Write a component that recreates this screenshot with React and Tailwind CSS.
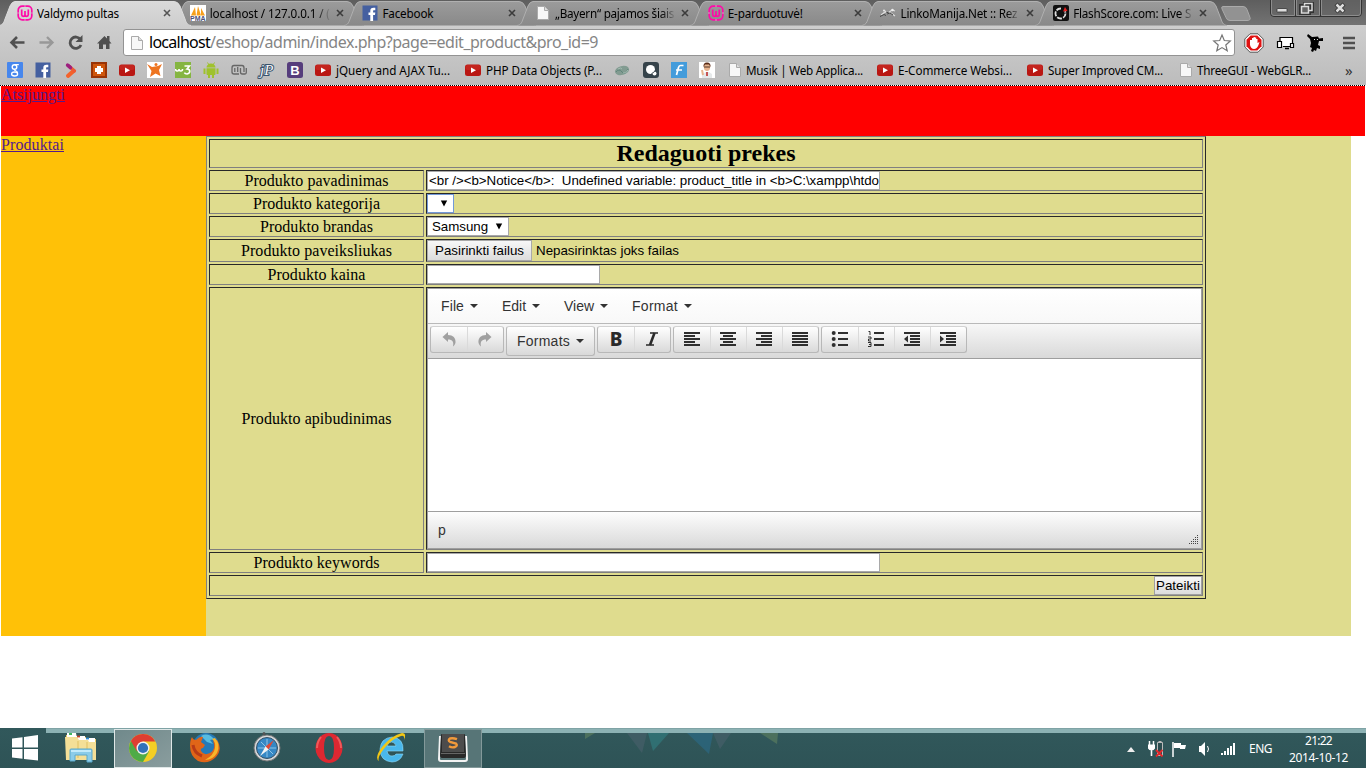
import React, { useLayoutEffect, useRef } from 'react';

/* Text tracked so that it fills the given width */
function T({ w, className = '', children }) {
  const ref = useRef(null);
  useLayoutEffect(() => {
    const el = ref.current;
    el.style.letterSpacing = '0px';
    const width = el.getBoundingClientRect().width;
    el.style.letterSpacing = (w - width) / el.textContent.length + 'px';
  }, [w]);
  return (
    <span ref={ref} className={'inline-block shrink-0 whitespace-pre ' + className}>
      {children}
    </span>
  );
}

function Svg({ size = 16, box = '0 0 16 16', className = '', children }) {
  return (
    <svg width={size} height={size} viewBox={box} className={'block shrink-0 ' + className}>
      {children}
    </svg>
  );
}

const Wamp = () => (
  <Svg>
    <rect x="1.2" y="1.2" width="13.6" height="13.6" rx="4" fill="none" stroke="#ff0aa8" strokeWidth="1.7" />
    <path d="M8 0v2M8 14v2M0 8h2M14 8h2" stroke="#c9a9bd" strokeWidth="1" />
    <path d="M4.700 4.500v5.200q0 1.600 1.600 1.600T8 9.700V6v3.700q0 1.600 1.600 1.600t1.700-1.600V4.500" fill="none" stroke="#ff0aa8" strokeWidth="1.700" />
  </Svg>
);
const Pma = () => (
  <Svg>
    <rect width="16" height="16" fill="#fff" />
    <path d="M1 10.500 5 2l1 8.500zM6.500 10.500 8 1l3 9.500zM11 10.500V3l4 7.500z" fill="#f7a01c" />
    <text x="0" y="16" fontSize="7" fontWeight="bold" fontFamily="Liberation Sans" fill="#4c5078">PMA</text>
  </Svg>
);
const Fb = () => (
  <Svg>
    <rect x=".5" y=".5" width="15" height="15" fill="#4560a0" />
    <path d="M8.300 16V10H6.500V7.400h1.800V6c0-2.200 1-3.200 3.200-3.200h1.800v2.500H12c-.7 0-.9.3-.9 1v1.100h2.200L13 10h-1.900v6z" fill="#fff" />
  </Svg>
);
const Page = () => (
  <Svg>
    <path d="M2.500 1.500h7l4 4v9h-11z" fill="#f7f7f7" stroke="#aaa" />
    <path d="M9.500 1.500v4h4" fill="#ddd" stroke="#aaa" />
  </Svg>
);
const Linko = () => (
  <Svg>
    <path d="M1 10 5 7l6 1 4 3M5 6l3 2 4-3 3 1" stroke="#ddd" strokeWidth="1.200" fill="none" />
    <path d="M0 11.500l4-2 2 1M7 9l3-1 3 2M6 7l3 1" stroke="#444" fill="none" />
    <circle cx="4" cy="5.500" r="1" fill="#eee" /><circle cx="12.500" cy="5" r="1.200" fill="#eee" />
  </Svg>
);
const Flash = () => (
  <Svg>
    <rect width="16" height="16" rx="2" fill="#111" />
    <circle cx="7.500" cy="8.500" r="5" fill="none" stroke="#ddd" strokeWidth="1.800" strokeDasharray="5 1.200" />
    <path d="M8 8V2h5v4z" fill="#111" /><path d="M10 6.500 12 2l2.500 4z" fill="#e62222" />
  </Svg>
);
const Close = ({ active }) => (
  <Svg size={8} box="0 0 8 8">
    <path d="M1 1l6 6M7 1L1 7" stroke={active ? '#555' : '#3c3c3c'} strokeWidth="1.600" />
  </Svg>
);

const tabs = [
  ['Valdymo pultas', 82, Wamp, true],
  ['localhost / 127.0.0.1 / (', 120, Pma],
  ['Facebook', 51, Fb],
  ['„Bayern“ pajamos šiais', 119, Page],
  ['E-parduotuvė!', 75, Wamp],
  ['LinkoManija.Net :: Rez', 117, Linko],
  ['FlashScore.com: Live S', 118, Flash],
];

function Tab({ title, w, Icon, active }) {
  return (
    <div className={'relative h-[25px] w-[172.7px] shrink-0 ' + (active ? 'z-10' : '')}>
      <svg className="absolute top-0 left-0 block overflow-visible" width="190" height="26" viewBox="0 0 190 26">
        <path
          d="M-1 25.500C3 25 4 22 5 19L10 6Q12 1.500 15 1.500H174Q178 1.500 180 6L185 19C186 22 187 25 191 25.500"
          fill={active ? 'url(#tabOn)' : 'url(#tabOff)'}
          stroke={active ? '#dcdcdc' : '#b0b0b0'}
        />
        {active && <rect x="0" y="25" width="190" height="1.500" fill="#cecece" />}
      </svg>
      <div className="relative flex h-full items-center pl-[17px] text-[#000]">
        <Icon />
        <div
          className={
            'ml-1 flex h-full w-[121px] items-center overflow-hidden ' +
            (w > 110 ? 'mask-r-from-88% mask-r-to-100%' : '')
          }
        >
          <T w={w} className="text-[11.7px] leading-[18px]">{title}</T>
        </div>
        <div className="ml-[5px]"><Close active={active} /></div>
      </div>
    </div>
  );
}

const Yt = () => (
  <Svg>
    <rect x="0" y="2.500" width="16" height="11.500" rx="2.500" fill="#b91612" />
    <rect x=".5" y="3" width="15" height="5" rx="2" fill="#d0332c" opacity=".5" />
    <path d="M6 5.500v5.500l5-2.700z" fill="#fff" />
  </Svg>
);
const GoogleG = () => (
  <Svg>
    <rect width="16" height="16" rx="1" fill="#4787ed" />
    <ellipse cx="7.500" cy="5" rx="2.300" ry="2.300" fill="none" stroke="#fff" strokeWidth="1.400" />
    <ellipse cx="7.600" cy="12" rx="3" ry="2" fill="none" stroke="#fff" strokeWidth="1.300" />
    <path d="M7.500 2.600h4.300M7.500 7.500q0 1 1.500 1.500t1.500 2" fill="none" stroke="#fff" strokeWidth="1.300" />
  </Svg>
);
const Chevron = () => (
  <Svg>
    <path d="M4.500 3 8 6" stroke="#9d1f7e" strokeWidth="3.400" />
    <path d="M5.200 13.800 10.500 9" stroke="#f4622b" strokeWidth="4.200" strokeLinecap="round" />
    <path d="M7 5l4.500 4" stroke="#ee5a35" strokeWidth="3.200" strokeLinecap="round" />
    <path d="M4.500 3 7.500 5.600" stroke="#9d1f7e" strokeWidth="3.400" strokeLinecap="round" />
  </Svg>
);
const Plus = () => (
  <Svg>
    <rect width="16" height="16" fill="#9a3406" /><rect x="2" y="2" width="12" height="12" fill="#cf560c" />
    <path d="M6 4h4v2h2v4h-2v2H6v-2H4V6h2z" fill="#fff" />
  </Svg>
);
const Joy = () => (
  <Svg>
    <rect width="16" height="16" fill="#fff" />
    <path d="M0 2l5 3 6-1 4-2-3 6 1.500 6-5-2.500L3 15l1.500-6z" fill="#ee7420" /><circle cx="9" cy="2.500" r="1.500" fill="#ee7420" />
  </Svg>
);
const W3 = () => (
  <Svg>
    <rect width="16" height="16" fill="#85b541" />
    <path d="M.5 7q0 2 1.800 2T4 7q0 2 1.800 2T7.500 7M9.500 4h5l-2.500 3q2.800 0 2.800 2.300T12 12q-2 0-2.600-1.300" fill="none" stroke="#fff" strokeWidth="1.600" />
  </Svg>
);
const Android = () => (
  <Svg>
    <path d="M3.500 5.500a4.500 4 0 0 1 9 0zM3.500 6.300h9V12q0 1-1 1H11v3H9v-3H7v3H5v-3h-.5q-1 0-1-1zM.5 6.500h2V12h-2zM13.500 6.500h2V12h-2z" fill="#9fc22d" />
    <path d="M4.500.5 6 3M11.500.5 10 3" stroke="#9fc22d" />
  </Svg>
);
const Mj = () => (
  <Svg>
    <path d="M1 6q0-2.500 2-2.500h8Q13 3.500 13 6v4M3.800 6v4M6.700 5v5M9.500 6v4q0 2 1.800 2H14q1.300 0 1.300-1.500V6M1 6v4q0 2 2 2h5" fill="none" stroke="#666" strokeWidth="1.300" />
  </Svg>
);
const Jp = () => (
  <Svg className="overflow-visible">
    <text x="1" y="12.500" fontSize="15" fontStyle="italic" fontFamily="Liberation Serif" fill="#f4f6f8" stroke="#38536d" strokeWidth="2" paintOrder="stroke">jP</text>
  </Svg>
);
const Boot = () => (
  <Svg>
    <rect width="16" height="16" rx="2.500" fill="#563d7c" />
    <text x="8" y="12.500" textAnchor="middle" fontSize="13" fontWeight="bold" fontFamily="Liberation Sans" fill="#fff">B</text>
  </Svg>
);
const Brain = () => (
  <Svg>
    <ellipse cx="8" cy="8.500" rx="7.200" ry="4.500" transform="rotate(-15 8 8.500)" fill="#829b91" />
    <path d="M2 10q3-4 6 0t6-3" stroke="#5f857a" fill="none" />
    <path d="M4 7q3-2 4 0M9 11q3 1 5-3" stroke="#a5bdb2" fill="none" />
  </Svg>
);
const Bubble = () => (
  <Svg>
    <rect width="16" height="16" rx="3" fill="#36434a" /><circle cx="7.500" cy="7.500" r="4.500" fill="#fff" />
    <circle cx="11.500" cy="11.500" r="2" fill="#fff" /><path d="M8.500 11.500q2.500-.5 3.500-3" stroke="#36434a" fill="none" />
  </Svg>
);
const Fblue = () => (
  <Svg>
    <rect width="16" height="16" fill="#449cdb" />
    <path d="M12.500 3.500H9.500Q8 3.500 7.500 5.500L5.500 13M5 8h6" fill="none" stroke="#fff" strokeWidth="1.700" />
  </Svg>
);
const Man = () => (
  <Svg>
    <rect width="16" height="16" fill="#fff" />
    <path d="M3 16v-4l4-2h3l3 2v4z" fill="#e6e9ea" /><ellipse cx="8" cy="5" rx="3.200" ry="4" fill="#e8b48e" />
    <path d="M4.500 5Q4 .5 8 .5T11.500 5L10 2.500H6z" fill="#5a2c18" /><path d="M5 5h6" stroke="#503023" />
    <path d="M8 10v4" stroke="#b22" strokeWidth="1.500" /><path d="M3 8l1 5" stroke="#e8b48e" strokeWidth="2" />
  </Svg>
);

const marks = [
  [GoogleG, 'w-[28px]'], [Fb, 'w-[28px]'], [Chevron, 'w-[28px]'], [Plus, 'w-[28px]'], [Yt, 'w-[28px]'],
  [Joy, 'w-[28px]'], [W3, 'w-[28px]'], [Android, 'w-[28px]'], [Mj, 'w-[28px]'], [Jp, 'w-[28px]'], [Boot, 'w-[28px]'],
  [Yt, 'w-[150px]', 'jQuery and AJAX Tu...', 114],
  [Yt, 'w-[149px]', 'PHP Data Objects (P...', 116],
  [Brain, 'w-[29px]'], [Bubble, 'w-[28px]'], [Fblue, 'w-[28px]'], [Man, 'w-[28px]'],
  [Page, 'w-[150px]', 'Musik | Web Applica...', 117],
  [Yt, 'w-[150px]', 'E-Commerce Websi...', 114],
  [Yt, 'w-[151px]', 'Super Improved CM...', 115],
  [Page, 'w-[167px]', 'ThreeGUI - WebGLR...', 114],
];

function Chrome() {
  return (
    <header className="font-['Noto_Sans','Open_Sans',sans-serif]">
      <div className="flex h-[25px] bg-linear-to-b from-[#5e5e5e] to-[#737373]">
        <svg width="0" height="0" className="absolute">
          <defs>
            <linearGradient id="tabOn" x2="0" y2="1"><stop stopColor="#dadada" /><stop offset="1" stopColor="#cecece" /></linearGradient>
            <linearGradient id="tabOff" x2="0" y2="1"><stop stopColor="#9b9b9b" /><stop offset="1" stopColor="#898989" /></linearGradient>
          </defs>
        </svg>
        {tabs.map(([title, w, Icon, active]) => (
          <Tab key={title} title={title} w={w} Icon={Icon} active={active} />
        ))}
        <svg width="36" height="25" className="ml-[11px] block shrink-0">
          <path d="M3 6.500h20q3 0 4 3l3 8q1 3-3 3H10q-3 0-4-3L2 9Q1 6.500 3 6.500z" fill="#929292" stroke="#aaa" />
        </svg>
        <svg width="94" height="18" className="ml-auto mr-[3px] block shrink-0">
          <path d="M1.500-1V13q0 3.500 3.500 3.500H89q3.500 0 3.500-3.500V-1M26.500 0v16M51.500 0v16" fill="#646464" fillOpacity=".5" stroke="#333" />
          <path d="M2.500 0V13q0 2.500 2.500 2.500H25.500V0M27.500 0v15.500h23V0M52.500 0v15.500H89q2.500 0 2.500-2.500V0" fill="none" stroke="#8d8d8d" />
          <rect x="8" y="8.500" width="10" height="3.500" rx=".5" fill="#ddd" stroke="#333" strokeWidth=".8" />
          <path d="M35.500 6.500V3.500h8v8h-3M31.500 5.500h9v8h-9z" fill="none" stroke="#333" strokeWidth="3" />
          <path d="M35.500 5.500V3.500h7.500v7h-3M32.500 6.500h7v6.500h-7z" fill="none" stroke="#ddd" strokeWidth="1.500" />
          <path d="M67 4l8 8M75 4l-8 8" stroke="#333" strokeWidth="4.200" />
          <path d="M67.500 4.500l7 7M74.500 4.500l-7 7" stroke="#ddd" strokeWidth="2.500" />
        </svg>
      </div>
      <div className="flex h-[33px] items-center bg-linear-to-b from-[#cecece] to-[#c4c4c4] pt-[2px]">
        <svg width="123" height="28" viewBox="0 0 123 28" className="block shrink-0">
          <path d="M24.500 13.500H12M17 8l-5.500 5.500L17 19" fill="none" stroke="#505050" strokeWidth="2.600" />
          <path d="M39.500 13.500H52M47 8l5.500 5.500L47 19" fill="none" stroke="#989898" strokeWidth="2.300" />
          <path d="M80.500 10.500A5.700 5.700 0 1 0 81 16" fill="none" stroke="#505050" strokeWidth="2.800" />
          <path d="M82.500 6v7h-7z" fill="#505050" />
          <path d="M97 14.500 104.500 7l2.500 2.500V7h2.500v5l2 2.500h-2V20h-3.500v-4.500h-3V20h-4v-5.500z" fill="#505050" />
        </svg>
        <div className="flex h-[27px] w-[1112px] items-center rounded-[3px] border border-[#939393] bg-white px-[5px]">
          <Page />
          <div className="ml-[4px] flex pb-px text-[16px] leading-[22px]">
            <T w={61} className="text-black">localhost</T>
            <T w={388} className="text-[#858585]">/eshop/admin/index.php?page=edit_product&amp;pro_id=9</T>
          </div>
          <Svg size={20} box="0 0 20 20" className="-mr-[3px] ml-auto">
            <path d="M10 2l2.300 5.500 6 .5-4.500 4 1.400 5.800L10 14.600 4.800 17.800 6.200 12 1.700 8l6-.5z" fill="#fff" stroke="#757575" strokeWidth="1.200" />
          </Svg>
        </div>
        <div className="ml-[9px] flex items-center">
          <Svg size={20} box="0 0 20 20">
            <path d="M6 .8h8L19.200 6v8L14 19.200H6L.8 14V6z" fill="#fff" stroke="#555" />
            <path d="M6.700 2.500h6.600l4.200 4.200v6.600l-4.200 4.200H6.700l-4.200-4.200V6.700z" fill="#df1111" />
            <path d="M6 8v4q1 4 4 4t4.500-4l1-3-2 1V6h-1.300V4.500h-1.400V4H9.500v1H8v2H6z" fill="#fff" />
          </Svg>
          <svg width="20" height="18" viewBox="0 0 20 18" className="ml-[12px] block">
            <path d="M4 12V3.500h12.500V12M7 12.500h8" fill="#fff" stroke="#000" strokeWidth="1.200" />
            <path d="M9 14.500h4" stroke="#000" strokeWidth="1.500" />
            <path d="M1.500 7.500h4v6h-4zM14.500 9.500h3v4h-3z" fill="#fff" stroke="#000" strokeWidth="1.200" />
          </svg>
          <svg width="18" height="20" viewBox="0 0 18 20" className="ml-[11px] block">
            <path d="M1 1l4 3 6-.5 1 2 4-.5v3h-4l-1 4 2 1v3l-3-1-1 3-2-1-1 2-2-1 1-3-2-1 1-4-1-4-3-3z" fill="#000" />
            <path d="M7 6l1 1M10 6l.8 1" stroke="#eee" />
          </svg>
          <svg width="14" height="14" viewBox="0 0 14 14" className="ml-[17px] block">
            <path d="M1 2h12M1 7h12M1 12h12" stroke="#505050" strokeWidth="2.600" />
          </svg>
        </div>
      </div>
      <div className="flex h-[27px] items-center bg-linear-to-b from-[#c4c4c4] to-[#bcbcbc] pl-[7px] pb-[3px]">
        {marks.map(([Icon, width, text, w], i) => (
          <div key={i} className={'flex h-full shrink-0 items-center ' + width}>
            <Icon />
            {text && <T w={w} className={'pb-px text-[11.7px] leading-4 text-black ' + (Icon === Page ? 'ml-[3px]' : 'ml-[5px]')}>{text}</T>}
          </div>
        ))}
        <span className="w-3 text-[15px] leading-4 text-[#333]">»</span>
      </div>
      <div className="h-px bg-[repeating-linear-gradient(90deg,#000_0_1px,#fff_1px_2px)]" />
    </header>
  );
}

const dim = "border border-t-[#282828] border-l-[#282828] border-b-[#808080] border-r-[#808080]";

function Label({ children, w }) {
  return <div className={'flex items-center justify-center text-[16px] leading-[18px] text-black ' + dim}><T w={w}>{children}</T></div>;
}
function Cell({ children, className = '' }) {
  return <div className={"flex items-start overflow-hidden font-['Liberation_Sans',sans-serif] text-[13.33px] leading-[15px] text-black " + dim + ' ' + className}>{children}</div>;
}
const field = 'h-[19px] border border-t-[#a9a9a9] border-l-[#a9a9a9] border-b-[#a9a9a9] border-r-[#a9a9a9] bg-white ';
const Down = () => (
  <svg width="8" height="7" viewBox="0 0 8 7" className="block shrink-0"><path d="M.8.500h6.400L4 6.500z" fill="#000" /></svg>
);

const Caret = ({ className = '' }) => (
  <svg width="8" height="4" viewBox="0 0 8 4" className={'block shrink-0 ' + className}><path d="M0 0h8L4 4z" fill="#333" /></svg>
);
const group = 'flex h-[27px] shrink-0 rounded-[3px] border border-[#b8b8b8] border-t-[#d2d2d2] bg-linear-to-b from-white to-[#d9d9d9] ';
function Group({ items, className = '' }) {
  return (
    <div className={group + className}>
      {items.map((it, i) => (
        <div key={i} className={'flex w-[36px] items-center justify-center pb-px ' + (i ? 'border-l border-[#dadada] pr-[2px]' : '')}>{it}</div>
      ))}
    </div>
  );
}
const lines = (rows, extra) => (
  <svg width="18" height="16" viewBox="0 0 18 16" className="block">
    {rows.map(([x, w], i) => <rect key={i} x={x} y={1 + i * (rows.length === 3 ? 6 : 3)} width={w} height="2" fill="#2f2f2f" />)}
    {extra}
  </svg>
);
const Undo = ({ flip }) => (
  <svg width="16" height="16" viewBox="0 0 16 16" className={'block ' + (flip ? '-scale-x-100' : '')}>
    <path d="M1.500 6 7 1v3c5 0 8 3 7.500 7.500-.3 1.700-1.200 3-2.500 4 1-4.500-.5-7-5-7V11z" fill="#a0a0a0" />
  </svg>
);

function Editor() {
  return (
    <div className="flex h-[261px] w-[775px] flex-col border border-[#9e9e9e] bg-white text-[14px] text-[#333]">
      <div className="flex h-[35px] items-center border-b border-[#b9b9b9] bg-linear-to-b from-white to-[#f8f8f8] pl-[13px]">
        <div className="flex w-[61px] items-center"><T w={23}>File</T><Caret className="ml-[6px]" /></div>
        <div className="flex w-[62px] items-center"><T w={24}>Edit</T><Caret className="ml-[6px]" /></div>
        <div className="flex w-[68px] items-center"><T w={30}>View</T><Caret className="ml-[6px]" /></div>
        <div className="flex items-center"><T w={46}>Format</T><Caret className="ml-[6px]" /></div>
      </div>
      <div className="flex h-[35px] items-start gap-[2px] border-b border-[#9e9e9e] bg-linear-to-b from-[#f7f7f7] to-[#d9d9d9] pt-[2px] pl-[2px]">
        <Group items={[<Undo />, <Undo flip />]} />
        <div className={group + 'h-[30px]! w-[89px] items-center justify-center'}>
          <T w={53}>Formats</T><Caret className="ml-[6px]" />
        </div>
        <Group
          items={[
            <span className="font-['Noto_Sans'] text-[19px] leading-5 font-extrabold text-[#2a2a2a]">B</span>,
            <svg width="14" height="16" viewBox="0 0 14 16" className="block"><path d="M5 2h8M1 14h8" stroke="#2a2a2a" strokeWidth="1.400" /><path d="M9.500 2 5 14" stroke="#2a2a2a" strokeWidth="2.600" /></svg>,
          ]}
        />
        <Group
          items={[
            lines([[1, 16], [1, 11], [1, 16], [1, 11], [1, 16]]),
            lines([[1, 16], [4, 10], [1, 16], [4, 10], [1, 16]]),
            lines([[1, 16], [6, 11], [1, 16], [6, 11], [1, 16]]),
            lines([[1, 16], [1, 16], [1, 16], [1, 16], [1, 16]]),
          ]}
        />
        <Group
          items={[
            lines([[7, 10], [7, 10], [7, 10]], [2, 8, 14].map((y) => <circle key={y} cx="2.700" cy={y} r="2" fill="#2f2f2f" />)),
            lines([[7, 10], [7, 10], [7, 10]], <path d="M1.500.5H3V4M1 6h3v2H1.500v2H4M1 11.500h3v4H1M2 13.500h2" fill="none" stroke="#2f2f2f" />),
            lines([[1, 16], [7, 10], [7, 10], [7, 10], [1, 16]], <path d="M5 4.500v7L1 8z" fill="#2f2f2f" />),
            lines([[1, 16], [7, 10], [7, 10], [7, 10], [1, 16]], <path d="M1 4.500v7L5 8z" fill="#2f2f2f" />),
          ]}
        />
      </div>
      <div className="flex-1" />
      <div className="flex h-[37px] items-center justify-between border-t border-[#9e9e9e] bg-linear-to-b from-[#fdfdfd] to-[#d9d9d9] pl-[10px]">
        <span>p</span>
        <svg width="12" height="12" viewBox="0 0 12 12" className="mr-[1px] mb-[1px] block self-end">
          {[0, 1, 2, 3, 4].map((r) =>
            Array.from({ length: r + 1 }, (_, c) => <rect key={r + '-' + c} x={9 - c * 2} y={0 + r * 2} width="1" height="1" fill="#444" />)
          )}
        </svg>
      </div>
    </div>
  );
}

function ProductForm() {
  return (
    <div className="grid h-[463px] w-[1000px] grid-cols-[215px_777px] grid-rows-[29px_21px_21px_21px_23px_21px_263px_21px_21px] gap-[2px] border border-t-[#808080] border-r-[#282828] border-b-[#282828] border-l-[#808080] p-[2px]">
      <div className={'col-span-2 flex items-center justify-center text-[24px] leading-[27px] font-bold text-black ' + dim}>
        <T w={179}>Redaguoti prekes</T>
      </div>
      <Label w={144}>Produkto pavadinimas</Label>
      <Cell>
        <div className={field + 'flex w-[453px] items-center overflow-hidden pl-px'}>
          <T w={450}>{'<br /><b>Notice</b>:  Undefined variable: product_title in <b>C:\\xampp\\htdo'}</T>
        </div>
      </Cell>
      <Label w={127}>Produkto kategorija</Label>
      <Cell>
        <div className="flex h-[19px] w-[27px] items-center border border-[#7399d8] bg-white pl-[12px]"><Down /></div>
      </Cell>
      <Label w={113}>Produkto brandas</Label>
      <Cell>
        <div className={field + 'flex w-[82px] items-center pl-[4px]'}><T w={56}>Samsung</T><div className="ml-[7px]"><Down /></div></div>
      </Cell>
      <Label w={151}>Produkto paveiksliukas</Label>
      <Cell>
        <div className="flex h-[21px] w-[105px] items-center justify-center border border-[#a9a9a9] bg-linear-to-b from-[#f7f7f7] to-[#dcdcdc]"><T w={89}>Pasirinkti failus</T></div>
        <T w={143} className="ml-[4px] self-center">Nepasirinktas joks failas</T>
      </Cell>
      <Label w={98}>Produkto kaina</Label>
      <Cell><div className={field + 'w-[173px]'} /></Cell>
      <Label w={150}>Produkto apibudinimas</Label>
      <Cell><Editor /></Cell>
      <Label w={126}>Produkto keywords</Label>
      <Cell><div className={field + 'w-[453px]'} /></Cell>
      <div className={"col-span-2 flex justify-end font-['Liberation_Sans',sans-serif] text-[13.33px] leading-[15px] text-black " + dim}>
        <div className="flex h-[19px] w-[48px] items-center justify-center border border-[#a0a0a0] bg-linear-to-b from-[#f7f7f7] to-[#dcdcdc]"><T w={44}>Pateikti</T></div>
      </div>
    </div>
  );
}

const Big = ({ children, className = '' }) => <svg width="32" height="32" viewBox="0 0 32 32" className={'block ' + className}>{children}</svg>;
const Explorer = () => (
  <Big>
    <path d="M1 3h10v2h10v2h10v20H1z" fill="#eccb6b" /><path d="M2 1h9l1 5h-10zM10 4h10v4H10zM20 6h10v4H20z" fill="#fff" />
    <path d="M0 5h12l2 3h9l1 2h7v18H1z" fill="#f4df97" /><path d="M13 9v17M22 10v14" stroke="#dfbf61" />
    <path d="M4 2h3" stroke="#2ab04d" strokeWidth="1.800" /><path d="M12 4.500h3" stroke="#c8442a" strokeWidth="1.800" /><path d="M21 6.500h3" stroke="#2d8ad0" strokeWidth="1.800" />
    <path d="M5 18q0-1 1-1h20q1 0 1 1v12h-5v-7H10v6H5z" fill="#8bcce9" stroke="#5aa8cb" /><path d="M6 19h20" stroke="#d5f4ff" strokeWidth="1.500" />
  </Big>
);
const ChromeIcon = () => (
  <Big>
    <circle cx="16" cy="16" r="14" fill="#f4ce24" />
    <path d="M16 16 3.900 9A14 14 0 0 0 16 30l6-10.500z" fill="#4fab47" />
    <path d="M3.900 9A14 14 0 0 1 28.300 9.500H16L10 19.500z" fill="#de3e32" />
    <circle cx="16" cy="16" r="6.500" fill="#f2f2f2" /><circle cx="16" cy="16" r="5.100" fill="#3272ba" />
  </Big>
);
const Firefox = () => (
  <Big>
    <circle cx="17" cy="14" r="13" fill="#257ab7" /><path d="M12 4q7-4 13 3l-4 1 3 4-6-2z" fill="#57bce0" />
    <path d="M3 5q1 3 4 3 4-4 7-3l-2 5 4 3-2 3q-3 0-2 3 3 5 9 2 5-3 4-9-2-6 3-4 6 9-1 17-8 8-18 4Q1 24 1 14 1 8 3 5z" fill="#e06518" />
    <path d="M26 6q6 7 2 15-4 7-12 7 9-5 10-12 1-6-3-9z" fill="#f8b62b" /><path d="M4 13q1 8 9 11" stroke="#b83b17" strokeWidth="3" fill="none" />
  </Big>
);
const Safari = () => (
  <Big>
    <circle cx="16" cy="16" r="13" fill="#d5d8da" stroke="#777" /><circle cx="16" cy="16" r="10.500" fill="#3688c5" stroke="#365267" />
    <path d="M16 7v18M7 16h18M10 10l12 12" stroke="#a7d4ef" strokeWidth=".8" />
    <path d="M23 8l-5.500 9.500-3-3z" fill="#dd4a38" /><path d="M9 24l5.500-9.500 3 3z" fill="#f4f4f4" /><circle cx="13" cy="1.500" r="1.500" fill="#555" />
  </Big>
);
const Opera = () => (
  <Big>
    <path d="M16 1a13.500 15 0 1 0 .01 0zM16 4q5 0 5 12t-5 12-5-12 5-12z" fillRule="evenodd" fill="#dd2831" />
    <path d="M8 5Q4 10 4 16M24 5q4 5 4 11" stroke="#ee5b5c" strokeWidth="2" fill="none" />
  </Big>
);
const IE = () => (
  <Big>
    <path d="M28 19H12q1 5 5 5 3 0 4-2h7q-3 8-11 8Q5 29 5 17 6 6 17 5q12 1 11 14zM12 14h9q-1-4-4.500-4T12 14z" fill="#49b7eb" stroke="#8edcfa" strokeWidth=".6" />
    <path d="M4 29Q-1 26 7 15 17 3 27 1q5 0 2 7 1-5-3-4Q16 7 8 18q-6 8-4 11z" fill="#f2c716" />
  </Big>
);
const Sublime = () => (
  <Big>
    <path d="M3 4 2 27q0 2 2 2h24q2 0 2-2L29 4" fill="none" stroke="#f3f3f3" strokeWidth="2" />
    <path d="M4 3q0-1 1-1h22q1 0 1 1l1 20q0 3-2 3H5q-2 0-2-3z" fill="#292929" /><path d="M5 2h22v18H5z" fill="#4c4c4c" /><path d="M4 21.500h24" stroke="#666" />
    <path d="M20 7.200q-4-1.600-7-.7-2.500 2 0 3.300l6 1.700q2 2-1 3.500-3 1-6-.8" fill="none" stroke="#f19a3b" strokeWidth="2.400" />
  </Big>
);

const apps = [
  [Explorer, ''], [ChromeIcon, 'border border-[#dfe7e7] bg-linear-to-br from-[#70898b] to-[#8a9d9e]'], [Firefox, ''], [Safari, ''],
  [Opera, ''], [IE, ''], [Sublime, 'border border-[#83999a] bg-[#577577]'],
];

function Taskbar() {
  return (
    <footer className="relative flex h-10 overflow-hidden bg-linear-to-b from-[#31585b] to-[#2e5356] font-['Noto_Sans','Open_Sans',sans-serif] text-white">
      <div className="absolute top-0 right-0 left-[46px] h-[5px] border-t border-[#7fa3a5] bg-[#8cb2b4]" />
      <svg width="200" height="35" className="absolute top-[5px] left-[580px] block opacity-60">
        <path d="M5 0h10L5 6z" fill="#5f8260" /><path d="M47 0h20l-5 20z" fill="#4a606c" /><path d="M68 0h21L73 18z" fill="#318083" />
        <path d="M107 0h26l-4 21z" fill="#2b6c8b" /><path d="M133 0h18l-11 16z" fill="#4a606c" /><path d="M180 0h18l-1 11z" fill="#5f8260" />
      </svg>
      <div className="relative flex w-[50px] items-center pl-[12px]">
        <svg width="26" height="26" viewBox="0 0 26 26" className="block"><path d="M0 3.500l10.500-1.300V12.500H0zM12 2 26 0v12.500H12zM0 14h10.500v9.700L0 22.500zM12 14h14v11.500L12 24z" fill="#fff" /></svg>
      </div>
      <div className="relative flex items-center gap-1 pl-[2px]">
        {apps.map(([Icon, look], i) => (
          <div key={i} className={'flex h-[39px] w-[58px] items-center justify-center ' + look}><Icon /></div>
        ))}
      </div>
      <div className="relative ml-auto flex items-center pt-[2px] pr-[18px]">
        <svg width="112" height="20" viewBox="0 0 112 20" className="block">
          <path d="M0 13h8L4 8z" fill="#eee" />
          <path d="M30.500 3.500h5v13h-5zM31.500 2.500h3" fill="#2c4d50" stroke="#bbb" />
          <path d="M22.500 2v4M26.500 2v4" stroke="#fff" strokeWidth="1.500" /><path d="M21 5.500h7v4q-1 2-3.500 2T21 9.500zM23.700 11h1.600v6h-1.600z" fill="#fff" />
          <path d="M29 11l6.500 6.500M35.500 11 29 17.500" stroke="#e32629" strokeWidth="1.800" />
          <path d="M46 3v15" stroke="#fff" strokeWidth="1.500" /><path d="M47 4h7v2h5l-1 4h-5V9h-6z" fill="#fff" />
          <path d="M72 7h2l4-4v14l-4-4h-2z" fill="#fff" /><path d="M80.500 7q2 3 0 6" stroke="#fff" fill="none" />
          <path d="M95 14v2M98 12v4M101 9v7M104 7v9M107 4v12" stroke="#fff" strokeWidth="2" />
        </svg>
        <T w={23} className="ml-[10px] text-[12px] leading-4">ENG</T>
        <div className="ml-[17px] flex flex-col items-center text-[12px] leading-[17px]">
          <T w={27}>21:22</T>
          <T w={59}>2014-10-12</T>
        </div>
      </div>
    </footer>
  );
}

export default function App() {
  return (
    <div className="flex h-[768px] w-[1366px] flex-col overflow-hidden bg-white">
      <Chrome />
      <main className="flex-1 bg-white px-px font-['Liberation_Serif',serif] text-[16px] leading-[18px]">
        <div className="h-[50px] bg-[#ff0000]">
          <a className="block text-[#551a8b]"><T w={64} className="underline">Atsijungti</T></a>
        </div>
        <div className="flex h-[500px] w-[1350px]">
          <nav className="w-[205px] bg-[#ffc107]">
            <a className="block text-[#551a8b]"><T w={63} className="underline">Produktai</T></a>
          </nav>
          <section className="flex-1 bg-[#dfdc8e]"><ProductForm /></section>
        </div>
      </main>
      <Taskbar />
    </div>
  );
}
